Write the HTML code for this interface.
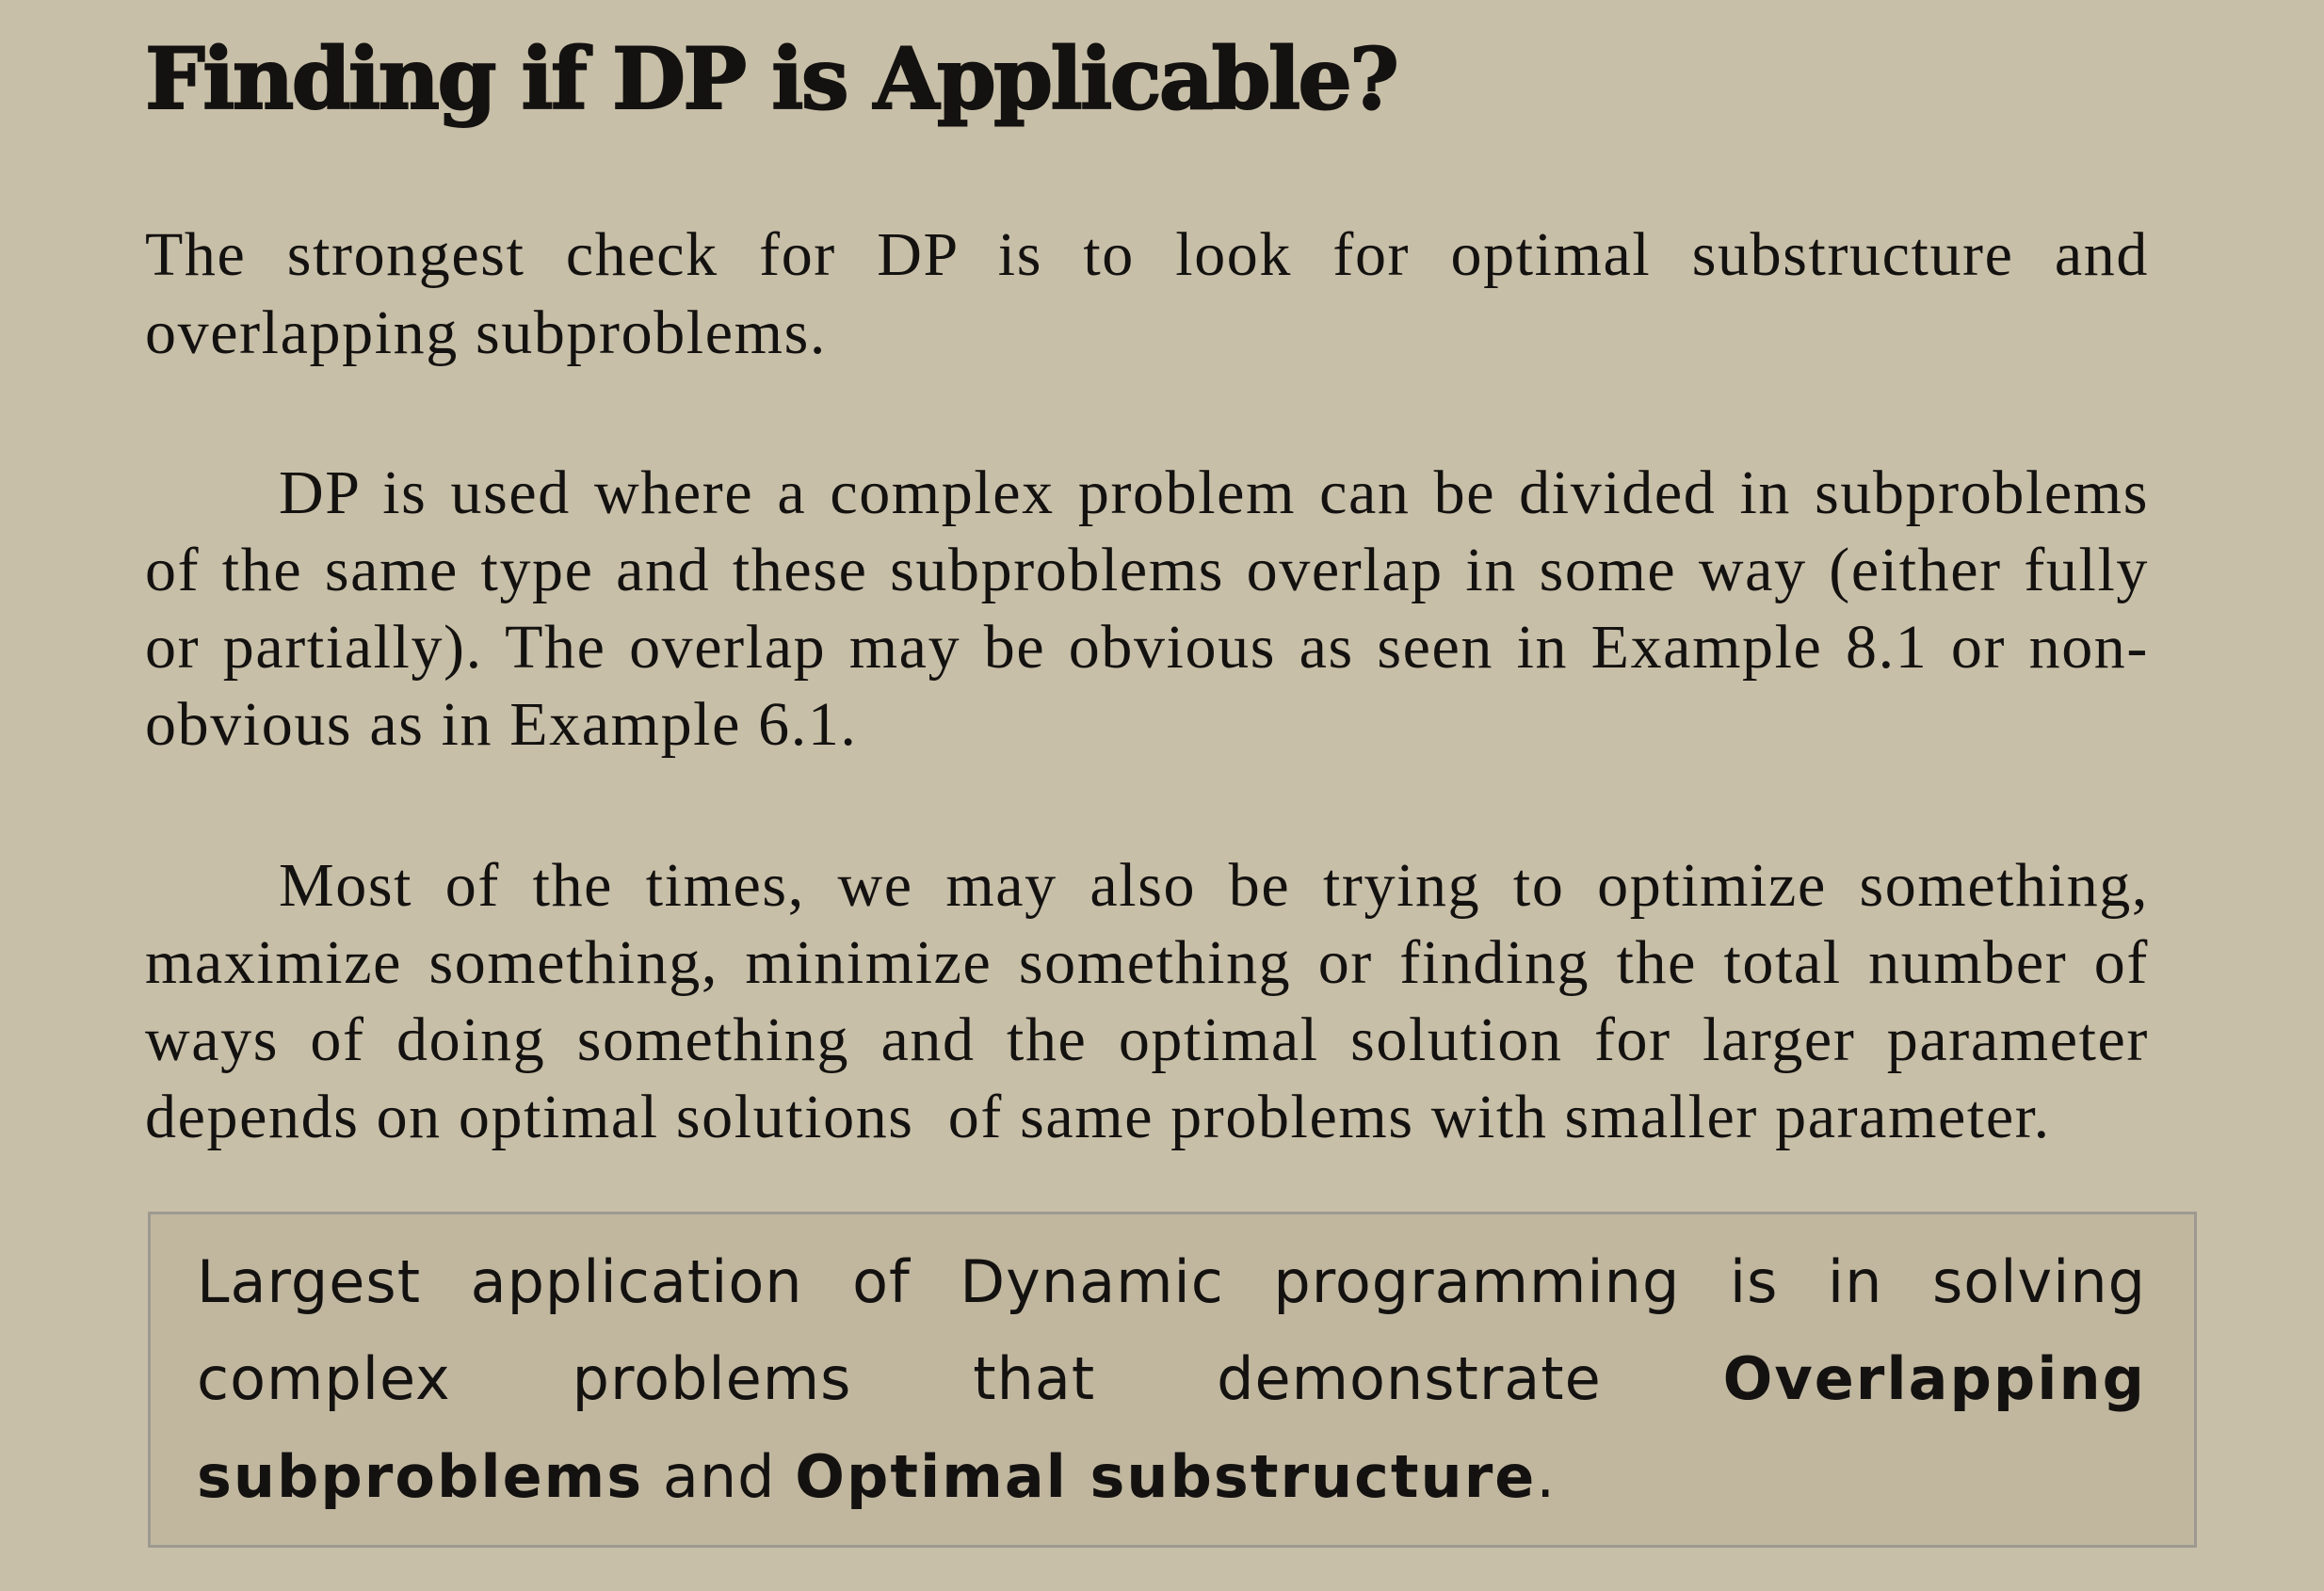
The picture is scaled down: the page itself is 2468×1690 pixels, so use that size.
<!DOCTYPE html>
<html><head><meta charset="utf-8">
<style>
html,body{margin:0;padding:0}
body{width:2468px;height:1690px;background:#c8bfa8;position:relative;overflow:hidden;color:#141210}
.l{position:absolute;left:154px;width:2128px;height:82px;line-height:82px;font-family:"Liberation Serif",serif;font-size:66px;letter-spacing:1.6px;white-space:nowrap}
.j{text-align:justify;text-align-last:justify}
.t{position:absolute;left:154px;top:24px;font-family:"DejaVu Serif","Liberation Serif",serif;font-weight:bold;font-size:90px;line-height:120px;letter-spacing:-2.6px;white-space:nowrap;-webkit-text-stroke:2px #141210}
.box{position:absolute;left:157px;top:1287px;width:2170px;height:351px;border:3px solid #9d9a90;background:#c1b79f}
.b{position:absolute;left:209px;width:2070px;height:103px;line-height:103px;font-family:"DejaVu Sans","Liberation Sans",sans-serif;font-size:62px;letter-spacing:1px;white-space:nowrap}
.b b{letter-spacing:2px}
</style></head><body>
<div class="t">Finding if DP is Applicable?</div>
<div class="l j" style="top:230px">The strongest check for DP is to look for optimal substructure and</div>
<div class="l" style="top:313px">overlapping subproblems.</div>

<div class="l j" style="top:483px;left:296px;width:1986px">DP is used where a complex problem can be divided in subproblems</div>
<div class="l j" style="top:565px">of the same type and these subproblems overlap in some way (either fully</div>
<div class="l j" style="top:647px">or partially). The overlap may be obvious as seen in Example 8.1 or non-</div>
<div class="l" style="top:729px">obvious as in Example 6.1.</div>

<div class="l j" style="top:900px;left:296px;width:1986px">Most of the times, we may also be trying to optimize something,</div>
<div class="l j" style="top:982px">maximize something, minimize something or finding the total number of</div>
<div class="l j" style="top:1064px">ways of doing something and the optimal solution for larger parameter</div>
<div class="l" style="top:1146px">depends on optimal solutions&nbsp; of same problems with smaller parameter.</div>

<div class="box"></div>
<div class="b j" style="top:1310px">Largest application of Dynamic programming is in solving</div>
<div class="b j" style="top:1413px">complex problems that demonstrate <b>Overlapping</b></div>
<div class="b" style="top:1517px"><b>subproblems</b> and <b>Optimal substructure</b>.</div>
</body></html>
